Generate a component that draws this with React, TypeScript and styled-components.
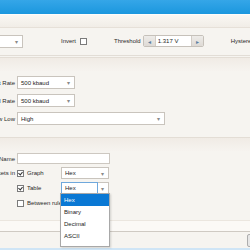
import React, { useState } from "react";
import styled, { createGlobalStyle } from "styled-components";

const GlobalStyle = createGlobalStyle`
  html, body {
    margin: 0;
    padding: 0;
    overflow: hidden;
    background: #f6f4f0;
  }
  body {
    font-family: "Liberation Sans", Arial, sans-serif;
    font-size: 6px;
    color: #1e1e1e;
  }
`;

const formatList = ["Hex", "Binary", "Decimal", "ASCII"];

export default function App() {
  const [graphOn, setGraphOn] = useState(true);
  const [tableOn, setTableOn] = useState(true);
  const [rulersOn, setRulersOn] = useState(false);
  const [tableFormat, setTableFormat] = useState("Hex");
  const [listOpen, setListOpen] = useState(true);

  return (
    <Frame>
      <GlobalStyle />
      <TitleBar />
      <Strip />
      <TopRow>
        <Select $width={60} $offset={-37}>
          <span></span>
          <Arrow>▾</Arrow>
        </Select>
        <Caption $gap={38}>Invert</Caption>
        <Check $on={false} style={{ marginLeft: 4 }} />
        <Caption $gap={27}>Threshold</Caption>
        <Spinner>
          <SpinButton>◂</SpinButton>
          <SpinValue>1.317 V</SpinValue>
          <SpinButton>▸</SpinButton>
        </Spinner>
        <Caption $gap={27}>Hysteresis</Caption>
      </TopRow>

      <Band />
      <FormGrid $top={5} $rowGap={5}>
        <Label>Nominal Bit Rate</Label>
        <Select $width={58}>
          <span>500 kbaud</span>
          <Arrow>▾</Arrow>
        </Select>
        <Label>Data Baud Rate</Label>
        <Select $width={58}>
          <span>500 kbaud</span>
          <Arrow>▾</Arrow>
        </Select>
        <Label>Show Low</Label>
        <Select $width={148}>
          <span>High</span>
          <Arrow>▾</Arrow>
        </Select>
      </FormGrid>

      <Band $top={12} />
      <FormGrid $top={2} $rowGap={3}>
        <Label>Name</Label>
        <TextInput />
        <Label>Show packets in</Label>
        <CheckRow>
          <CheckLabel onClick={() => setGraphOn(!graphOn)}>
            <Check $on={graphOn} />
            Graph
          </CheckLabel>
          <Select $width={48} $height={12}>
            <span>Hex</span>
            <Arrow>▾</Arrow>
          </Select>
        </CheckRow>
        <span />
        <CheckRow>
          <CheckLabel onClick={() => setTableOn(!tableOn)}>
            <Check $on={tableOn} />
            Table
          </CheckLabel>
          <DropWrap>
            <Select
              $width={48}
              $height={12}
              $focused
              onClick={() => setListOpen(!listOpen)}
            >
              <FocusText>{tableFormat}</FocusText>
              <Arrow>▾</Arrow>
            </Select>
            {listOpen && (
              <DropList>
                {formatList.map((val) => (
                  <DropItem
                    key={val}
                    $active={val === tableFormat}
                    onClick={() => {
                      setTableFormat(val);
                      setListOpen(false);
                    }}
                  >
                    {val}
                  </DropItem>
                ))}
              </DropList>
            )}
          </DropWrap>
        </CheckRow>
        <span />
        <CheckLabel onClick={() => setRulersOn(!rulersOn)}>
          <Check $on={rulersOn} />
          Between rulers
        </CheckLabel>
      </FormGrid>

      <FooterBand />
      <Footer>
        <FooterButton />
      </Footer>
      <StatusLine />
    </Frame>
  );
}

const Frame = styled.div`
  width: 250px;
  height: 250px;
  display: flex;
  flex-direction: column;
  background: #f6f4f0;
  overflow: hidden;
`;

const TitleBar = styled.div`
  height: 14px;
  flex-shrink: 0;
  background: linear-gradient(#35a6e8, #1b97de);
`;

const Strip = styled.div`
  height: 12px;
  flex-shrink: 0;
  border-top: 1px solid #fdfcfa;
  border-bottom: 1px solid #e6e0d8;
  background: linear-gradient(#f9f7f3, #f1ede7);
`;

const TopRow = styled.div`
  height: 26px;
  flex-shrink: 0;
  display: flex;
  align-items: center;
  border-bottom: 1px solid #e2ddd6;
  padding-bottom: 1px;
`;

const Caption = styled.span<{ $gap: number }>`
  margin-left: ${(p) => p.$gap}px;
  white-space: nowrap;
  color: #2a2a2a;
`;

const Spinner = styled.div`
  margin-left: 2px;
  width: 61px;
  height: 12px;
  box-sizing: border-box;
  display: flex;
  border: 1px solid #c6c1ba;
  border-radius: 2px;
  background: #fff;
  overflow: hidden;
  flex-shrink: 0;
`;

const SpinButton = styled.div`
  width: 11px;
  display: flex;
  align-items: center;
  justify-content: center;
  background: linear-gradient(#eeece9, #dedad5);
  color: #5b7fa3;
  font-size: 6px;
`;

const SpinValue = styled.div`
  flex: 1;
  display: flex;
  align-items: center;
  padding-left: 2px;
  border-left: 1px solid #d2cdc6;
  border-right: 1px solid #d2cdc6;
`;

const Band = styled.div<{ $top?: number }>`
  margin-top: ${(p) => p.$top ?? 1}px;
  height: 13px;
  flex-shrink: 0;
  border-top: 1px solid #e3ddd5;
  background: linear-gradient(#f0ebe5, #f6f3ef);
`;

const FormGrid = styled.div<{ $top: number; $rowGap: number }>`
  margin-top: ${(p) => p.$top}px;
  display: grid;
  grid-template-columns: 15px 1fr;
  column-gap: 2px;
  row-gap: ${(p) => p.$rowGap}px;
  align-items: center;
`;

const Label = styled.div`
  display: flex;
  justify-content: flex-end;
  white-space: nowrap;
  color: #2a2a2a;
`;

const Select = styled.div<{
  $width: number;
  $height?: number;
  $offset?: number;
  $focused?: boolean;
}>`
  position: relative;
  width: ${(p) => p.$width}px;
  height: ${(p) => p.$height ?? 13}px;
  margin-left: ${(p) => p.$offset ?? 0}px;
  flex-shrink: 0;
  box-sizing: border-box;
  display: flex;
  align-items: center;
  justify-content: space-between;
  padding-left: 3px;
  background: #fff;
  border: 1px solid #c9c4bd;
  color: #222;
  cursor: default;
`;

const FocusText = styled.span`
  align-self: stretch;
  display: flex;
  align-items: center;
  margin: -1px 0 -1px -4px;
  padding-left: 3px;
  width: 33px;
  border: 1px solid #6fa8dc;
`;

const Arrow = styled.span`
  width: 11px;
  text-align: center;
  color: #8a8a8a;
  font-size: 6px;
`;

const TextInput = styled.div`
  width: 93px;
  height: 11px;
  box-sizing: border-box;
  background: #fff;
  border: 1px solid #cdc8c1;
`;

const CheckRow = styled.div`
  display: flex;
  align-items: center;
  justify-content: space-between;
  width: 92px;
`;

const CheckLabel = styled.label`
  display: flex;
  align-items: center;
  gap: 3px;
  white-space: nowrap;
  color: #2a2a2a;
  height: 12px;
`;

const Check = styled.span<{ $on: boolean }>`
  width: 7px;
  height: 7px;
  flex-shrink: 0;
  box-sizing: border-box;
  border: 1px solid #7b7b7b;
  background: #fff;
  position: relative;

  &::after {
    content: "";
    display: ${(p) => (p.$on ? "block" : "none")};
    position: absolute;
    left: 1px;
    top: 0px;
    width: 2px;
    height: 3px;
    border: solid #333;
    border-width: 0 1px 1px 0;
    transform: rotate(40deg);
  }
`;

const DropWrap = styled.div`
  position: relative;
`;

const DropList = styled.div`
  position: absolute;
  left: -1px;
  top: 11px;
  width: 50px;
  box-sizing: border-box;
  padding: 0 0 4px;
  background: #fff;
  border: 1px solid #a8a8a8;
  box-shadow: 1px 1px 2px rgba(0, 0, 0, 0.15);
  z-index: 2;
`;

const DropItem = styled.div<{ $active: boolean }>`
  height: 12px;
  display: flex;
  align-items: center;
  padding-left: 3px;
  background: ${(p) => (p.$active ? "#0a78d4" : "transparent")};
  color: ${(p) => (p.$active ? "#fff" : "#222")};
`;

const FooterBand = styled.div`
  margin-top: 11px;
  height: 10px;
  flex-shrink: 0;
  border-top: 1px solid #ebe6df;
  border-bottom: 1px solid #cfcac3;
  background: #fbf9f6;
`;

const Footer = styled.div`
  flex: 1;
  display: flex;
  justify-content: flex-end;
  align-items: center;
`;

const FooterButton = styled.div`
  width: 10px;
  height: 13px;
  margin-right: -7px;
  box-sizing: border-box;
  border: 1px solid #adadad;
  border-radius: 2px;
  background: #e6e6e6;
`;

const StatusLine = styled.div`
  height: 2px;
  flex-shrink: 0;
  background: #cfe5f6;
`;
